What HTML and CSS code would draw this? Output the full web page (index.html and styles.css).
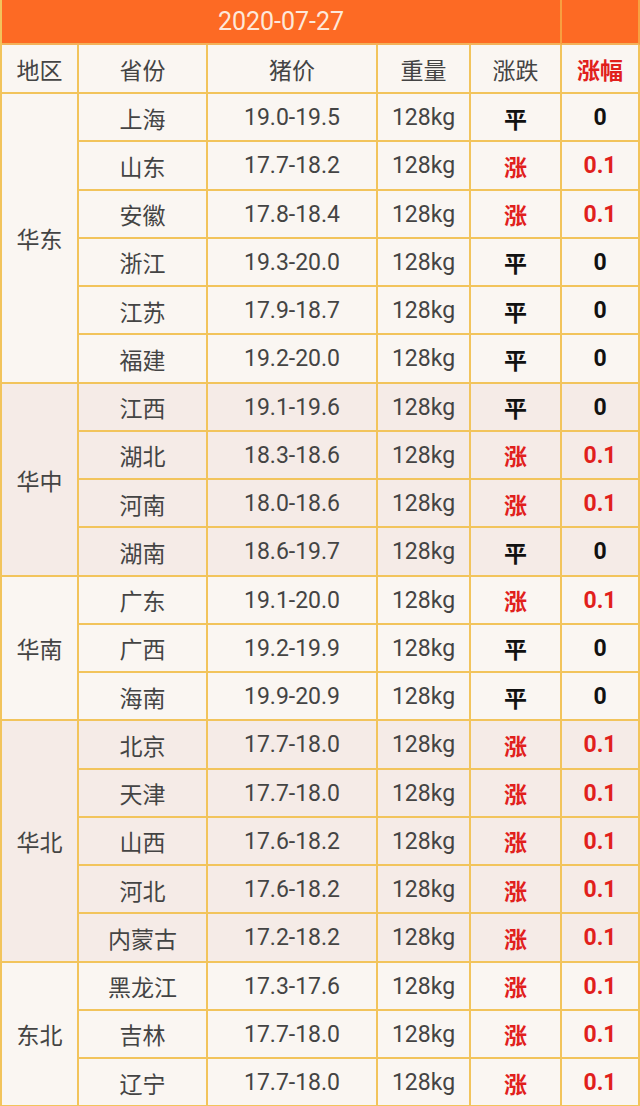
FILE: index.html
```html
<!DOCTYPE html>
<html lang="zh-CN">
<head>
<meta charset="utf-8">
<title>猪价 2020-07-27</title>
<link rel="stylesheet" href="styles.css">
</head>
<body>
<div class="sheet">
  <div class="c head date">2020-07-27</div>
  <div class="c head blank"></div>

  <div class="c a">地区</div>
  <div class="c a">省份</div>
  <div class="c a">猪价</div>
  <div class="c a">重量</div>
  <div class="c a">涨跌</div>
  <div class="c a up-h">涨幅</div>

  <div class="c a region r6">华东</div>
  <div class="c a">上海</div><div class="c a">19.0-19.5</div><div class="c a">128kg</div><div class="c a flat">平</div><div class="c a flat">0</div>
  <div class="c a">山东</div><div class="c a">17.7-18.2</div><div class="c a">128kg</div><div class="c a up">涨</div><div class="c a up">0.1</div>
  <div class="c a">安徽</div><div class="c a">17.8-18.4</div><div class="c a">128kg</div><div class="c a up">涨</div><div class="c a up">0.1</div>
  <div class="c a">浙江</div><div class="c a">19.3-20.0</div><div class="c a">128kg</div><div class="c a flat">平</div><div class="c a flat">0</div>
  <div class="c a">江苏</div><div class="c a">17.9-18.7</div><div class="c a">128kg</div><div class="c a flat">平</div><div class="c a flat">0</div>
  <div class="c a">福建</div><div class="c a">19.2-20.0</div><div class="c a">128kg</div><div class="c a flat">平</div><div class="c a flat">0</div>

  <div class="c b region r4">华中</div>
  <div class="c b">江西</div><div class="c b">19.1-19.6</div><div class="c b">128kg</div><div class="c b flat">平</div><div class="c b flat">0</div>
  <div class="c b">湖北</div><div class="c b">18.3-18.6</div><div class="c b">128kg</div><div class="c b up">涨</div><div class="c b up">0.1</div>
  <div class="c b">河南</div><div class="c b">18.0-18.6</div><div class="c b">128kg</div><div class="c b up">涨</div><div class="c b up">0.1</div>
  <div class="c b">湖南</div><div class="c b">18.6-19.7</div><div class="c b">128kg</div><div class="c b flat">平</div><div class="c b flat">0</div>

  <div class="c a region r3">华南</div>
  <div class="c a">广东</div><div class="c a">19.1-20.0</div><div class="c a">128kg</div><div class="c a up">涨</div><div class="c a up">0.1</div>
  <div class="c a">广西</div><div class="c a">19.2-19.9</div><div class="c a">128kg</div><div class="c a flat">平</div><div class="c a flat">0</div>
  <div class="c a">海南</div><div class="c a">19.9-20.9</div><div class="c a">128kg</div><div class="c a flat">平</div><div class="c a flat">0</div>

  <div class="c b region r5">华北</div>
  <div class="c b">北京</div><div class="c b">17.7-18.0</div><div class="c b">128kg</div><div class="c b up">涨</div><div class="c b up">0.1</div>
  <div class="c b">天津</div><div class="c b">17.7-18.0</div><div class="c b">128kg</div><div class="c b up">涨</div><div class="c b up">0.1</div>
  <div class="c b">山西</div><div class="c b">17.6-18.2</div><div class="c b">128kg</div><div class="c b up">涨</div><div class="c b up">0.1</div>
  <div class="c b">河北</div><div class="c b">17.6-18.2</div><div class="c b">128kg</div><div class="c b up">涨</div><div class="c b up">0.1</div>
  <div class="c b">内蒙古</div><div class="c b">17.2-18.2</div><div class="c b">128kg</div><div class="c b up">涨</div><div class="c b up">0.1</div>

  <div class="c a region r3">东北</div>
  <div class="c a">黑龙江</div><div class="c a">17.3-17.6</div><div class="c a">128kg</div><div class="c a up">涨</div><div class="c a up">0.1</div>
  <div class="c a">吉林</div><div class="c a">17.7-18.0</div><div class="c a">128kg</div><div class="c a up">涨</div><div class="c a up">0.1</div>
  <div class="c a">辽宁</div><div class="c a">17.7-18.0</div><div class="c a">128kg</div><div class="c a up">涨</div><div class="c a up">0.1</div>
</div>
</body>
</html>
```

FILE: styles.css
```css
html, body {
  margin: 0;
  padding: 0;
  background: #faf6f2;
}

.sheet {
  display: grid;
  grid-template-columns: 77px 129px 170px 93px 91px 78px;
  grid-template-rows: 45px 49px repeat(21, 48.25px);
  border-left: 2px solid #f2c45c;
  width: 638px;
  font-family: "Roboto", "Noto Sans CJK SC", sans-serif;
  font-size: 23px;
  color: #444;
}

.c {
  display: flex;
  align-items: center;
  justify-content: center;
  border-right: 2px solid #f2c45c;
  border-bottom: 2px solid #f2c45c;
  box-sizing: border-box;
  white-space: nowrap;
  padding-top: 1px;
}

.a { background: #faf6f2; }
.b { background: #f5ebe7; }

.head {
  background: #fd6a24;
  color: #fde8da;
  border-bottom-color: #f3b25a;
  border-right-color: #f7a040;
  padding-top: 0;
}

.date {
  grid-column: span 5;
  font-size: 25px;
}

.region { grid-column: 1; }
.r6 { grid-row: span 6; }
.r5 { grid-row: span 5; }
.r4 { grid-row: span 4; }
.r3 { grid-row: span 3; }

.flat {
  color: #111;
  font-weight: 700;
}

.up {
  color: #e1201c;
  font-weight: 700;
}

.up-h {
  color: #e1201c;
  font-weight: 700;
}
```
